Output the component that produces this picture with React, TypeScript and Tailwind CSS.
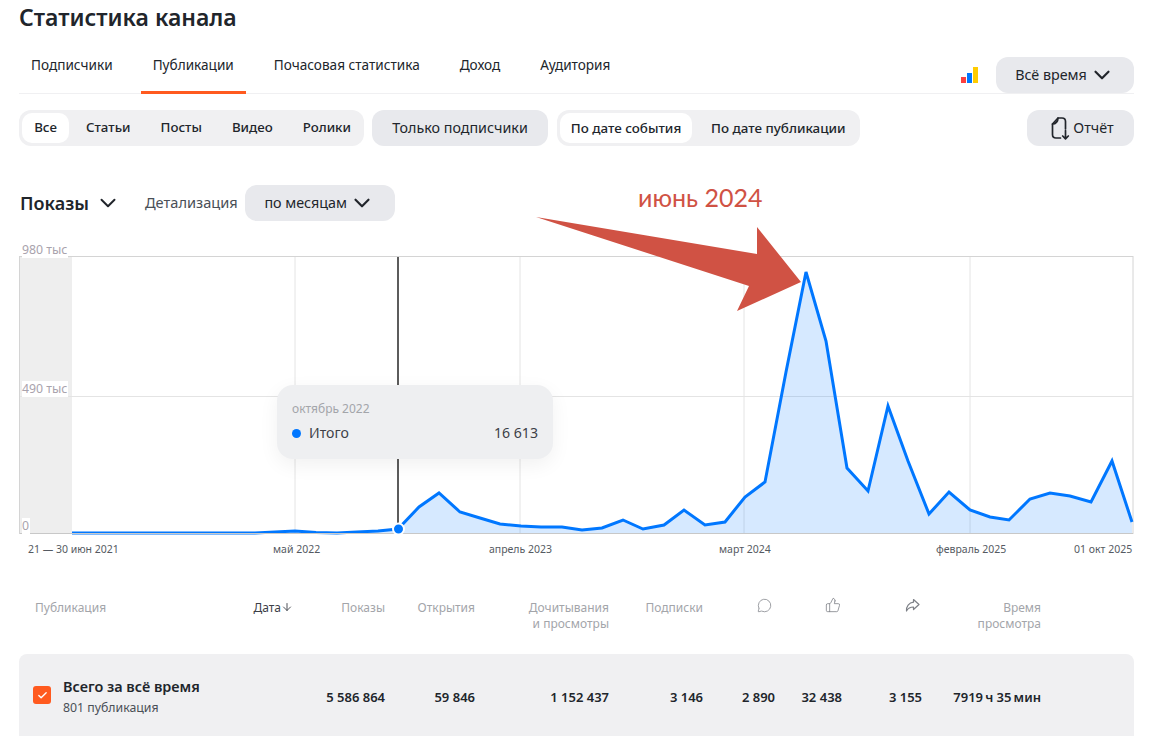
import { ChevronDown, MessageCircle, ThumbsUp, ArrowDown, Check } from "lucide-react"

const points: [number, number][] = [
    [72, 533], [255, 533], [275, 532], [295, 531], [316, 532.5], [337, 533], [357, 532], [378, 531], [398, 529],
    [419, 507], [439, 493], [460, 512], [480, 518], [500, 524], [521, 526], [541, 527], [562, 527], [582, 530],
    [602, 528], [623, 520], [643, 529], [664, 525], [684, 510], [705, 525], [725, 522], [745, 497], [765, 482],
    [786, 372], [806, 272], [826, 341], [847, 468], [868, 491], [888, 406], [908, 461], [929, 514], [949, 492],
    [970, 510], [990, 517], [1009, 520], [1030, 499], [1050, 493], [1070, 496], [1091, 502], [1112, 461], [1132, 522],
]

const line = points.map((p) => p.join(",")).join(" ")
const tabs = ["Подписчики", "Публикации", "Почасовая статистика", "Доход", "Аудитория"]
const kinds = ["Статьи", "Посты", "Видео", "Ролики"]
const axis = [
    { label: "21 — 30 июн 2021", x: "left-[9px]" },
    { label: "май 2022", x: "left-[254px]" },
    { label: "апрель 2023", x: "left-[470px]" },
    { label: "март 2024", x: "left-[700px]" },
    { label: "февраль 2025", x: "left-[917px]" },
    { label: "01 окт 2025", x: "left-[1055px]" },
]
const cols = "grid grid-cols-[218px_40px_92px_90px_134px_94px_72px_67px_80px_119px] pl-[16px]"

function Chart() {
    return (
        <svg viewBox="19 250 1115 290" className="absolute left-0 top-0 h-[290px] w-[1115px]">
            <rect x="19.5" y="256.5" width="1113.5" height="277" fill="#fff" stroke="#d4d4d4" />
            <rect x="20" y="257" width="52" height="276" fill="#eeeeee" />
            {[295, 520, 744, 970].map((x) => (
                <line key={x} x1={x} x2={x} y1="257" y2="533" stroke="#e4e4e4" />
            ))}
            <line x1="20" x2="1133" y1="396.5" y2="396.5" stroke="#e4e4e4" />
            <polygon points={`72,533 ${line} 1132,533`} fill="#0077ff" fillOpacity="0.16" />
            <line x1="398" x2="398" y1="257" y2="529" stroke="#5c5c5c" strokeWidth="2" />
            <polyline points={line} fill="none" stroke="#0077ff" strokeWidth="3" strokeLinejoin="miter" />
            <line x1="20" x2="1133" y1="533.5" y2="533.5" stroke="#c8c8c8" />
            <circle cx="398.5" cy="529" r="5.5" fill="#0077ff" stroke="#fff" strokeWidth="2" />
        </svg>
    )
}

export default function App() {
    return (
        <div className="h-[736px] w-[1170px] overflow-hidden bg-white px-[19px] font-['Noto_Sans',sans-serif] text-[#21252b]">
            <div className="relative w-[1115px]">
                <h1 className="-mt-px h-[38px] text-[23px] leading-[37px] font-semibold">Статистика канала</h1>

                {/* Tabs */}
                <div className="flex h-[57px] items-end justify-between border-b border-[#f0f0f2]">
                    <div className="flex gap-4">
                        {tabs.map((tab) => (
                            <div
                                key={tab}
                                className={
                                    tab === "Публикации"
                                        ? "-mb-px border-b-[3px] border-[#ff5a1f] px-3 pb-[16px] text-[13.6px] leading-5"
                                        : "-mb-px border-b-[3px] border-transparent px-3 pb-[16px] text-[13.6px] leading-5"
                                }
                            >
                                {tab}
                            </div>
                        ))}
                    </div>
                    <div className="flex items-end gap-[18px]">
                        <div className="mb-[10px] flex items-end gap-px">
                            <div className="h-[6px] w-[5px] bg-[#fc3f3f]" />
                            <div className="h-[10px] w-[5px] bg-[#0077ff]" />
                            <div className="h-[16px] w-[5px] bg-[#ffcc00]" />
                        </div>
                        <button className="flex h-9 w-[138px] items-center justify-center gap-[2px] rounded-xl bg-[#e8e9ed] text-[14.3px]">
                            Всё время
                            <ChevronDown size={26} strokeWidth={2} />
                        </button>
                    </div>
                </div>

                {/* Filters */}
                <div className="mt-4 flex h-9 items-center">
                    <div className="flex h-9 w-[345px] items-center rounded-xl bg-[#f0f0f2] px-[3px] text-[13.3px] font-medium">
                        <div className="mr-[2px] flex h-[30px] w-[47px] shrink-0 items-center justify-center rounded-[10px] bg-white">Все</div>
                        {kinds.map((kind) => (
                            <div key={kind} className="shrink-0 px-[15px]">{kind}</div>
                        ))}
                    </div>
                    <button className="ml-2 h-9 w-[176px] rounded-xl bg-[#e8e9ed] text-[14.3px]">Только подписчики</button>
                    <div className="ml-[9px] flex h-9 w-[303px] items-center rounded-xl bg-[#f0f0f2] px-[3px] text-[13.4px] font-medium whitespace-nowrap">
                        <div className="flex h-[30px] w-[132px] items-center justify-center rounded-[10px] bg-white">По дате события</div>
                        <div className="pl-[19px]">По дате публикации</div>
                    </div>
                    <button className="ml-auto flex h-9 w-[107px] items-center justify-center gap-[2px] rounded-xl bg-[#e8e9ed] pl-[4px] text-[14.3px]">
                        <svg width="22" height="24" viewBox="0 0 22 24" fill="none" stroke="#21252b" strokeWidth="1.7" strokeLinecap="round" strokeLinejoin="round" className="-ml-[2px]">
                            <path d="M11.5 22H7C5 22 3.5 20.5 3.5 18.5V8L9 2H13C15 2 16.5 3.5 16.5 5.5V13" />
                            <path d="M9 2C9 5 7 8 3.5 8" />
                            <path d="M16.5 14.5V22.5M13.7 20L16.5 22.8L19.3 20" />
                        </svg>
                        Отчёт
                    </button>
                </div>

                {/* Metric selector */}
                <div className="mt-[39px] flex h-9 items-center">
                    <span className="ml-px text-[18px] font-semibold">Показы</span>
                    <ChevronDown size={26} strokeWidth={1.8} className="ml-[6px]" />
                    <span className="ml-[24px] text-[14.6px] text-[#4a4f57]">Детализация</span>
                    <button className="ml-[7px] flex h-9 w-[150px] items-center justify-center gap-[2px] rounded-xl bg-[#e8e9ed] text-[14.3px]">
                        по месяцам
                        <ChevronDown size={26} strokeWidth={2} />
                    </button>
                </div>

                {/* Chart */}
                <div className="relative mt-[29px] h-[290px] w-[1115px]">
                    <Chart />
                    <div className="absolute left-[3px] top-[-8px] bg-white pr-px text-[12.3px] leading-[16px] text-[#a9a3ad]">980 тыс</div>
                    <div className="absolute left-[3px] top-[131px] bg-white pr-px text-[12.3px] leading-[16px] text-[#a9a3ad]">490 тыс</div>
                    <div className="absolute left-[3px] top-[268px] bg-white pr-px text-[12.3px] leading-[16px] text-[#a9a3ad]">0</div>
                    {axis.map((a) => (
                        <div key={a.label} className={`absolute top-[291px] text-[10.5px] leading-[16px] whitespace-nowrap text-[#555a62] ${a.x}`}>
                            {a.label}
                        </div>
                    ))}

                    {/* Tooltip */}
                    <div className="absolute left-[258px] top-[135px] h-[74px] w-[276px] rounded-2xl bg-[#eeeff1] px-[15px] pt-[15px] shadow-[0_6px_20px_rgba(0,0,0,0.06)]">
                        <div className="text-[12px] leading-[18px] text-[#a3a5aa]">октябрь 2022</div>
                        <div className="mt-[5px] flex items-center text-[14.1px] leading-5 text-[#3c4047]">
                            <span className="mr-2 size-[9px] rounded-full bg-[#0077ff]" />
                            Итого
                            <span className="ml-auto">16 613</span>
                        </div>
                    </div>
                </div>

                {/* Annotation */}
                <div className="absolute left-[619px] top-[181px] font-['Lato',sans-serif] text-[25px] leading-[34px] text-[#d05244]">июнь 2024</div>
                <svg className="absolute left-[517px] top-[218px]" width="270" height="100" viewBox="536 218 270 100">
                    <polygon points="536,218 757,255 757,228 801,283 737,312 749,287" fill="#d05244" />
                </svg>

                {/* Table header */}
                <div className={`${cols} mt-[60px] h-[54px] text-[12px] leading-[16px] text-[#a3a5aa]`}>
                    <div>Публикация</div>
                    <div className="flex items-start justify-end text-[#3c4047]">Дата<ArrowDown size={12} strokeWidth={1.8} className="mt-[1px] shrink-0" /></div>
                    <div className="text-right">Показы</div>
                    <div className="text-right">Открытия</div>
                    <div className="text-right">Дочитывания<br />и просмотры</div>
                    <div className="text-right">Подписки</div>
                    <div className="flex justify-end pr-[3px]"><MessageCircle size={15} strokeWidth={1.2} className="-mt-[2px] text-[#7d8087]" /></div>
                    <div className="flex justify-end pr-px"><ThumbsUp size={16} strokeWidth={1.2} className="-mt-[3px] text-[#7d8087]" /></div>
                    <div className="flex justify-end pr-[2px]">
                        <svg width="15" height="15" viewBox="0 0 15 15" fill="none" stroke="#7d8087" strokeWidth="1.2" strokeLinejoin="round" className="-mt-[2px]">
                            <path d="M8.5 1.5L14 6.5L8.5 11.5V9C5.5 9 3 10.2 1.5 13C1 8.5 4 4.5 8.5 4.2V1.5Z" />
                        </svg>
                    </div>
                    <div className="text-right">Время<br />просмотра</div>
                </div>

                {/* Total row */}
                <div className={`${cols} h-[90px] items-center rounded-t-lg bg-[#f0f0f2] text-[13px] font-semibold`}>
                    <div className="col-span-2 -mt-[4px] -ml-[2px] flex items-center gap-[12px]">
                        <div className="-mt-[4px] flex size-[18px] items-center justify-center rounded-[3px] bg-[#ff5a1f] text-white">
                            <Check size={11} strokeWidth={3} />
                        </div>
                        <div>
                            <div className="text-[14.4px] leading-[20px]">Всего за всё время</div>
                            <div className="mt-[2px] text-[12.3px] leading-[18px] font-normal text-[#4a4f57]">801 публикация</div>
                        </div>
                    </div>
                    <div className="-mt-[2px] text-right">5 586 864</div>
                    <div className="-mt-[2px] text-right">59 846</div>
                    <div className="-mt-[2px] text-right">1 152 437</div>
                    <div className="-mt-[2px] text-right">3 146</div>
                    <div className="-mt-[2px] text-right">2 890</div>
                    <div className="-mt-[2px] text-right">32 438</div>
                    <div className="-mt-[2px] text-right">3 155</div>
                    <div className="-mt-[2px] text-right whitespace-nowrap">7919&#8201;ч 35&#8201;мин</div>
                </div>
            </div>
        </div>
    )
}
